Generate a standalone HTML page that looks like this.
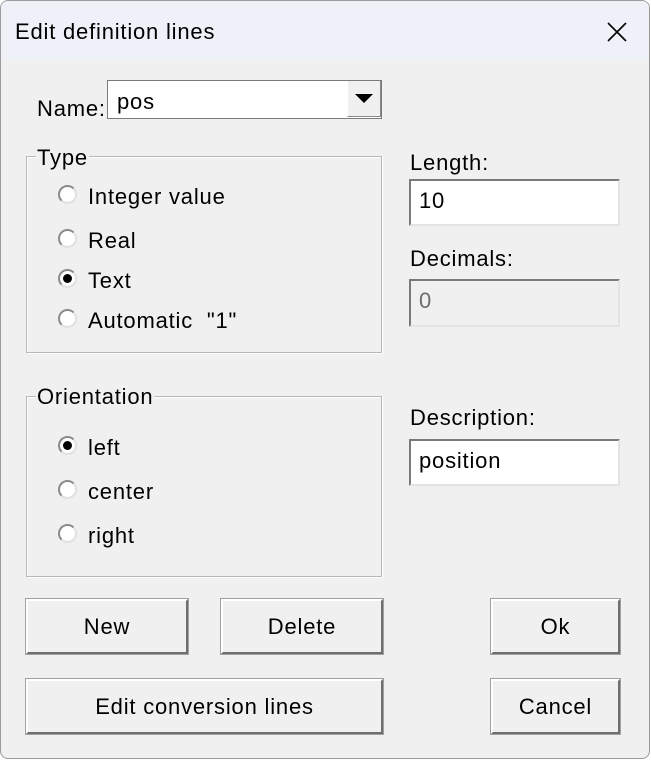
<!DOCTYPE html>
<html><head><style>
*{margin:0;padding:0;box-sizing:border-box}
body{width:651px;height:760px;background:#fff;font-family:"Liberation Sans",sans-serif;font-size:22px;letter-spacing:0.8px;color:#000;position:relative;overflow:hidden}
.win{position:absolute;left:0;top:0;width:650px;height:759px;background:#f0f0f0;border:1px solid #9a9a9a;border-radius:8px;overflow:hidden}
.title{position:absolute;left:0;top:0;width:100%;height:58px;background:#eef2f8}
.a{position:absolute;white-space:nowrap}
.grp{position:absolute;border:1px solid #b8b8b8;box-shadow:inset 1px 1px 0 #fff,1px 1px 0 #fff}
.leg{position:absolute;background:#f0f0f0;padding:0 1px;line-height:22px}
.inp{position:absolute;background:#fff;border-top:2px solid #7a7a7a;border-left:2px solid #7a7a7a;border-bottom:2px solid #e3e3e3;border-right:2px solid #e3e3e3;padding-left:8px;line-height:40px}
.btn{position:absolute;background:#f0f0f0;border-top:2px solid #fff;border-left:2px solid #fff;border-right:2px solid #6e6e6e;border-bottom:2px solid #6e6e6e;outline:1px solid #a0a0a0;text-align:center;line-height:51px}
.r{position:absolute;width:19px;height:19px;border-radius:50%;background:#fff;border:2px solid #8a8a8a;border-right-color:#e0e0e0;border-bottom-color:#e0e0e0}
.r.on::after{content:"";position:absolute;left:3px;top:3px;width:9px;height:9px;border-radius:50%;background:#000}
</style></head><body>
<div class="win">
<div class="title"></div>
<div class="a" style="left:14px;top:18px">Edit definition lines</div>
<svg class="a" style="left:605px;top:20px" width="22" height="22"><path d="M2 2L20 20M20 2L2 20" stroke="#000" stroke-width="1.6"/></svg>

<div class="a" style="left:36px;top:95px">Name:</div>
<div class="a" style="left:106px;top:79px;width:275px;height:39px;background:#fff;border:1px solid #7a7a7a"></div>
<div class="a" style="left:116px;top:88px">pos</div>
<div class="a" style="left:346px;top:80px;width:34px;height:36px;background:#f0f0f0;border-left:1px solid #fff;border-right:1px solid #888;border-bottom:1px solid #888"></div>
<svg class="a" style="left:354px;top:93px" width="18" height="10"><path d="M0 0H18L9 9Z" fill="#000"/></svg>

<div class="grp" style="left:25px;top:155px;width:356px;height:197px"></div>
<div class="leg" style="left:35px;top:146px">Type</div>
<div class="r" style="left:57px;top:184px"></div><div class="a" style="left:87px;top:183px">Integer value</div>
<div class="r" style="left:57px;top:228px"></div><div class="a" style="left:87px;top:227px">Real</div>
<div class="r on" style="left:57px;top:268px"></div><div class="a" style="left:87px;top:267px">Text</div>
<div class="r" style="left:57px;top:308px"></div><div class="a" style="left:87px;top:307px">Automatic &nbsp;"1"</div>

<div class="grp" style="left:25px;top:395px;width:356px;height:181px"></div>
<div class="leg" style="left:35px;top:385px">Orientation</div>
<div class="r on" style="left:57px;top:435px"></div><div class="a" style="left:87px;top:434px">left</div>
<div class="r" style="left:57px;top:479px"></div><div class="a" style="left:87px;top:478px">center</div>
<div class="r" style="left:57px;top:523px"></div><div class="a" style="left:87px;top:522px">right</div>

<div class="a" style="left:409px;top:149px">Length:</div>
<div class="inp" style="left:408px;top:178px;width:211px;height:47px">10</div>
<div class="a" style="left:409px;top:245px">Decimals:</div>
<div class="inp" style="left:408px;top:278px;width:211px;height:48px;background:#f0f0f0;color:#6d6d6d">0</div>
<div class="a" style="left:409px;top:404px">Description:</div>
<div class="inp" style="left:408px;top:438px;width:211px;height:47px">position</div>

<div class="btn" style="left:25px;top:598px;width:162px;height:55px">New</div>
<div class="btn" style="left:220px;top:598px;width:162px;height:55px">Delete</div>
<div class="btn" style="left:490px;top:598px;width:129px;height:55px">Ok</div>
<div class="btn" style="left:25px;top:678px;width:357px;height:55px">Edit conversion lines</div>
<div class="btn" style="left:490px;top:678px;width:129px;height:55px">Cancel</div>
</div>
</body></html>
